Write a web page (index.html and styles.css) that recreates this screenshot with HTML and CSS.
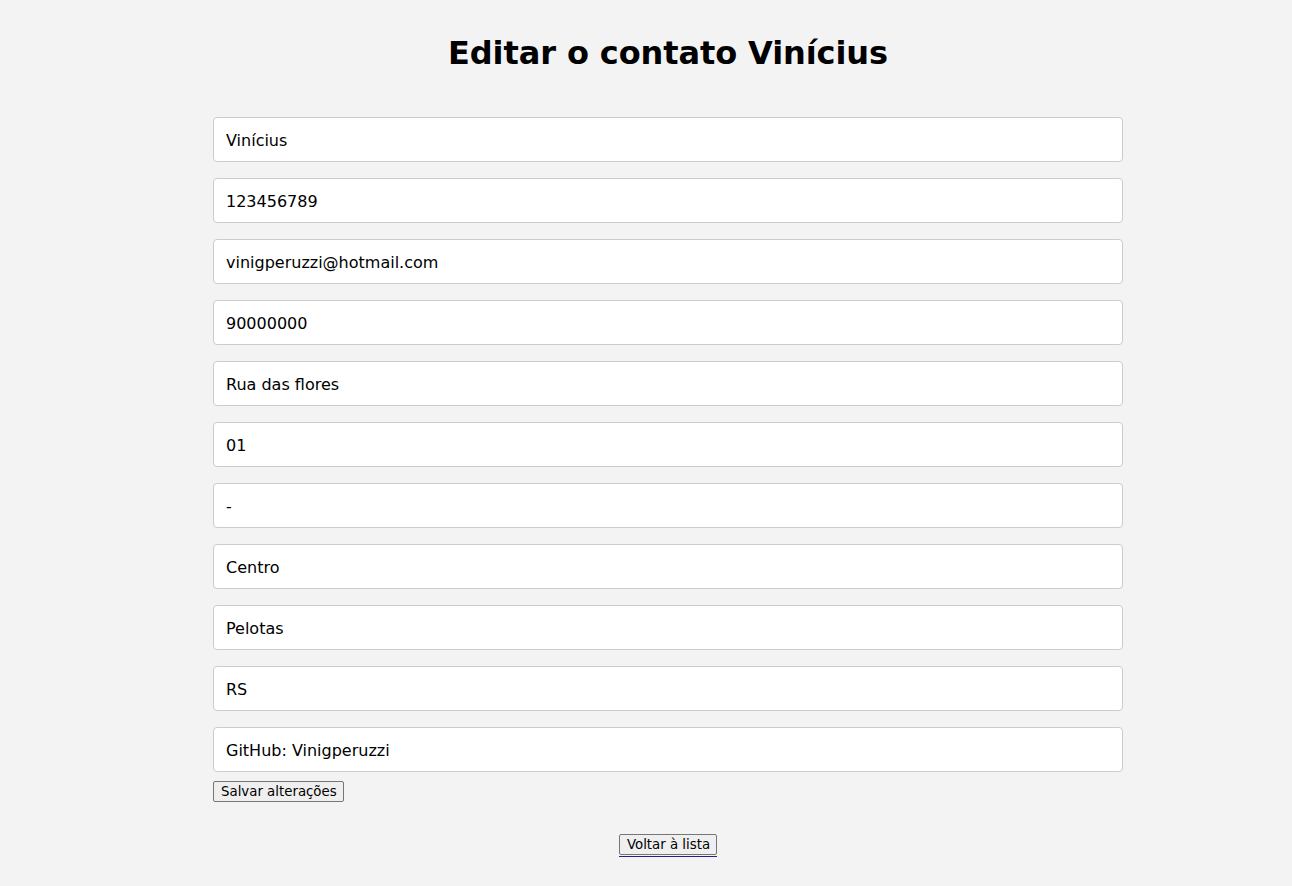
FILE: index.html
```html
<!DOCTYPE html>
<html lang="pt-BR">
<head>
<meta charset="utf-8">
<title>Editar contato</title>
<link rel="stylesheet" href="styles.css">
</head>
<body>
<main class="page">
  <h1 class="title">Editar o contato Vinícius</h1>
  <form class="form">
    <input class="field" type="text" value="Vinícius">
    <input class="field" type="text" value="123456789">
    <input class="field" type="text" value="vinigperuzzi@hotmail.com">
    <input class="field" type="text" value="90000000">
    <input class="field" type="text" value="Rua das flores">
    <input class="field" type="text" value="01">
    <input class="field" type="text" value="-">
    <input class="field" type="text" value="Centro">
    <input class="field" type="text" value="Pelotas">
    <input class="field" type="text" value="RS">
    <input class="field field-last" type="text" value="GitHub: Vinigperuzzi">
    <div class="actions"><button class="btn" type="button">Salvar alterações</button></div>
  </form>
  <div class="back"><a class="back-link" href="#"><button class="btn" type="button">Voltar à lista</button></a></div>
</main>
</body>
</html>
```
FILE: styles.css
```css
html, body {
  margin: 0;
  padding: 0;
  background: #f3f3f3;
}
body {
  font-family: "DejaVu Sans", Verdana, sans-serif;
  color: #000;
}
.page {
  padding: 35px 0 0 44px;
  display: flex;
  flex-direction: column;
  align-items: center;
}
.title {
  margin: 0 0 45px;
  font-size: 32px;
  font-weight: bold;
  line-height: 37px;
  letter-spacing: -0.1px;
}
.form {
  width: 910px;
  display: flex;
  flex-direction: column;
}
.field {
  box-sizing: border-box;
  width: 100%;
  height: 45px;
  margin: 0 0 16px;
  padding: 2px 12px 0;
  border: 1px solid #cccccc;
  border-radius: 4px;
  background: #fff;
  font-family: "DejaVu Sans", Verdana, sans-serif;
  font-size: 16px;
  color: #000;
  outline: none;
}
.field-last {
  margin-bottom: 9px;
}
.actions {
  display: flex;
}
.btn {
  font-family: "DejaVu Sans", Verdana, sans-serif;
  font-size: 13.33px;
  line-height: 17px;
  padding: 1px 6px 1px 7px;
  border: 1px solid #767676;
  border-radius: 2px;
  background: #efefef;
  color: #000;
  text-decoration: none;
}
.back {
  margin-top: 32px;
  display: flex;
  justify-content: center;
}
.back-link {
  display: flex;
  padding-bottom: 1px;
  border-bottom: 1px solid #2a1d8c;
  text-decoration: none;
}
```
